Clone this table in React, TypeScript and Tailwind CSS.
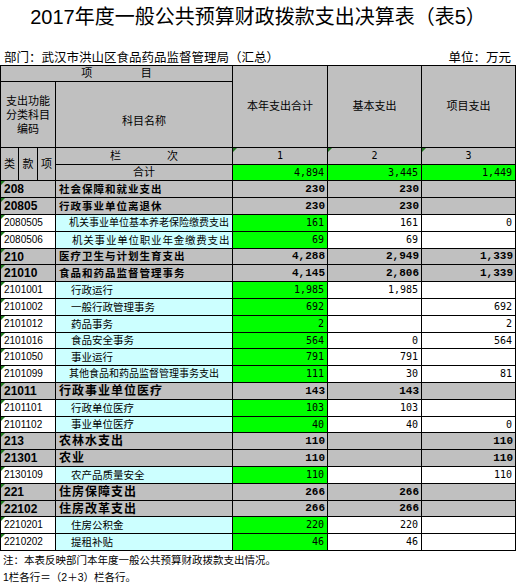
import React from 'react'

type Row = {
   code: string
   name: string
   a: string
   b: string
   c: string
   bold?: boolean
   big?: boolean
   nameCls?: string
}

const rows: Row[] = [
   { code: '208', name: '社会保障和就业支出', a: '230', b: '230', c: '', bold: true },
   { code: '20805', name: '行政事业单位离退休', a: '230', b: '230', c: '', bold: true },
   { code: '2080505', name: '机关事业单位基本养老保险缴费支出', a: '161', b: '161', c: '0', nameCls: 'pl-[13px] text-[10px]' },
   { code: '2080506', name: '机关事业单位职业年金缴费支出', a: '69', b: '69', c: '', nameCls: 'pl-[16px] text-[10.5px] tracking-[0.8px]' },
   { code: '210', name: '医疗卫生与计划生育支出', a: '4,288', b: '2,949', c: '1,339', bold: true },
   { code: '21010', name: '食品和药品监督管理事务', a: '4,145', b: '2,806', c: '1,339', bold: true },
   { code: '2101001', name: '行政运行', a: '1,985', b: '1,985', c: '' },
   { code: '2101002', name: '一般行政管理事务', a: '692', b: '', c: '692' },
   { code: '2101012', name: '药品事务', a: '2', b: '', c: '2' },
   { code: '2101016', name: '食品安全事务', a: '564', b: '0', c: '564' },
   { code: '2101050', name: '事业运行', a: '791', b: '791', c: '' },
   { code: '2101099', name: '其他食品和药品监督管理事务支出', a: '111', b: '30', c: '81', nameCls: 'pl-[13px] text-[10px]' },
   { code: '21011', name: '行政事业单位医疗', a: '143', b: '143', c: '', bold: true, big: true },
   { code: '2101101', name: '行政单位医疗', a: '103', b: '103', c: '' },
   { code: '2101102', name: '事业单位医疗', a: '40', b: '40', c: '0' },
   { code: '213', name: '农林水支出', a: '110', b: '', c: '110', bold: true, big: true },
   { code: '21301', name: '农业', a: '110', b: '', c: '110', bold: true, big: true },
   { code: '2130109', name: '农产品质量安全', a: '110', b: '', c: '110' },
   { code: '221', name: '住房保障支出', a: '266', b: '266', c: '', bold: true, big: true },
   { code: '22102', name: '住房改革支出', a: '266', b: '266', c: '', bold: true, big: true },
   { code: '2210201', name: '住房公积金', a: '220', b: '220', c: '' },
   { code: '2210202', name: '提租补贴', a: '46', b: '46', c: '' },
]

const Mark = () => (
   <span className="absolute left-0 top-0 h-0 w-0 border-t-[4px] border-r-[4px] border-t-[#1f7a1f] border-r-transparent" />
)

const cjk = "font-[family-name:'Liberation_Sans','Noto_Sans_CJK_SC',sans-serif]"
const num = "font-[family-name:'DejaVu_Sans_Mono',monospace]"
const numBold = "font-[family-name:'Liberation_Mono',monospace]"

export default function App() {
   return (
      <div className={`w-[516px] h-[585px] overflow-hidden bg-white text-black ${cjk}`}>
         <div className="h-[34px] flex items-center justify-center text-[20px] leading-none">
            2017年度一般公共预算财政拨款支出决算表（表5）
         </div>
         <div className="h-[31px] flex items-end justify-between pl-[4px] pr-[5px] text-[12.5px] leading-[14px]">
            <span>部门：武汉市洪山区食品药品监督管理局（汇总）</span>
            <span>单位：万元</span>
         </div>
         <table className="w-[515px] table-fixed border-collapse whitespace-nowrap text-[11px] leading-none">
            <colgroup>
               <col className="w-[18px]" />
               <col className="w-[19px]" />
               <col className="w-[18px]" />
               <col className="w-[177px]" />
               <col className="w-[95px]" />
               <col className="w-[94px]" />
               <col className="w-[94px]" />
            </colgroup>
            <tbody>
               <tr className="h-[16px] bg-[#c0c0c0]">
                  <td colSpan={4} className="border border-black p-0 text-center">
                     <span className="inline-flex w-full justify-around px-[56px]">
                        <span>项</span>
                        <span>目</span>
                     </span>
                  </td>
                  <td rowSpan={2} className="border border-black p-0 text-center">本年支出合计</td>
                  <td rowSpan={2} className="border border-black p-0 text-center">基本支出</td>
                  <td rowSpan={2} className="border border-black p-0 text-center">项目支出</td>
               </tr>
               <tr className="h-[66px] bg-[#c0c0c0]">
                  <td colSpan={3} className="border border-black p-0 text-center leading-[14px] whitespace-normal">
                     支出功能
                     <br />
                     分类科目
                     <br />
                     编码
                  </td>
                  <td className="border border-black p-0 pt-[14px] text-center">科目名称</td>
               </tr>
               <tr className="h-[17px] bg-[#c0c0c0]">
                  <td rowSpan={2} className="border border-black p-0 text-center">类</td>
                  <td rowSpan={2} className="border border-black p-0 text-center">款</td>
                  <td rowSpan={2} className="border border-black p-0 text-center">项</td>
                  <td className="border border-black p-0 text-center">
                     <span className="inline-flex w-full justify-between px-[54px]">
                        <span>栏</span>
                        <span>次</span>
                     </span>
                  </td>
                  <td className={`relative border border-black p-0 text-center text-[10px] ${num}`}>
                     <Mark />1
                  </td>
                  <td className={`relative border border-black p-0 text-center text-[10px] ${num}`}>
                     <Mark />2
                  </td>
                  <td className={`relative border border-black p-0 text-center text-[10px] ${num}`}>
                     <Mark />3
                  </td>
               </tr>
               <tr className="h-[16px]">
                  <td className="border border-black bg-[#c0c0c0] p-0 text-center">合计</td>
                  <td className={`border border-black bg-[#00ff00] p-0 pr-[3px] text-right text-[10px] ${num}`}>4,894</td>
                  <td className={`border border-black bg-[#00ff00] p-0 pr-[3px] text-right text-[10px] ${num}`}>3,445</td>
                  <td className={`border border-black bg-[#00ff00] p-0 pr-[3px] text-right text-[10px] ${num}`}>1,449</td>
               </tr>
               {rows.map((r, i) => {
                  const h = i % 5 === 4 ? 'h-[16px]' : 'h-[17px]'
                  if (r.bold) {
                     return (
                        <tr key={r.code} className={`${h} bg-[#c0c0c0] font-bold`}>
                           <td colSpan={3} className="relative border border-black p-0 pl-[3px] text-[12px]">
                              <Mark />
                              {r.code}
                           </td>
                           <td className={`border border-black p-0 pl-[3px] tracking-[1px] ${r.big ? 'text-[12px]' : 'text-[10.5px]'}`}>
                              {r.name}
                           </td>
                           <td className={`border border-black p-0 pr-[2px] text-right text-[11px] ${numBold}`}>{r.a}</td>
                           <td className={`border border-black p-0 pr-[2px] text-right text-[11px] ${numBold}`}>{r.b}</td>
                           <td className={`border border-black p-0 pr-[2px] text-right text-[11px] ${numBold}`}>{r.c}</td>
                        </tr>
                     )
                  }
                  return (
                     <tr key={r.code} className={h}>
                        <td colSpan={3} className="relative border border-black bg-white p-0 pl-[3px] text-[10px]">
                           <Mark />
                           {r.code}
                        </td>
                        <td className={`overflow-hidden border border-black bg-[#ccffff] p-0 ${r.nameCls ?? 'pl-[15px] text-[10.5px]'}`}>
                           {r.name}
                        </td>
                        <td className={`border border-black bg-[#00ff00] p-0 pr-[3px] text-right text-[10px] ${num}`}>{r.a}</td>
                        <td className={`border border-black bg-white p-0 pr-[3px] text-right text-[10px] ${num}`}>{r.b}</td>
                        <td className={`border border-black bg-white p-0 pr-[3px] text-right text-[10px] ${num}`}>{r.c}</td>
                     </tr>
                  )
               })}
            </tbody>
         </table>
         <div className="pl-[3px] pt-[1px] text-[10.5px] leading-[17px]">
            <div>注：本表反映部门本年度一般公共预算财政拨款支出情况。</div>
            <div>1栏各行＝（2＋3）栏各行。</div>
         </div>
      </div>
   )
}
